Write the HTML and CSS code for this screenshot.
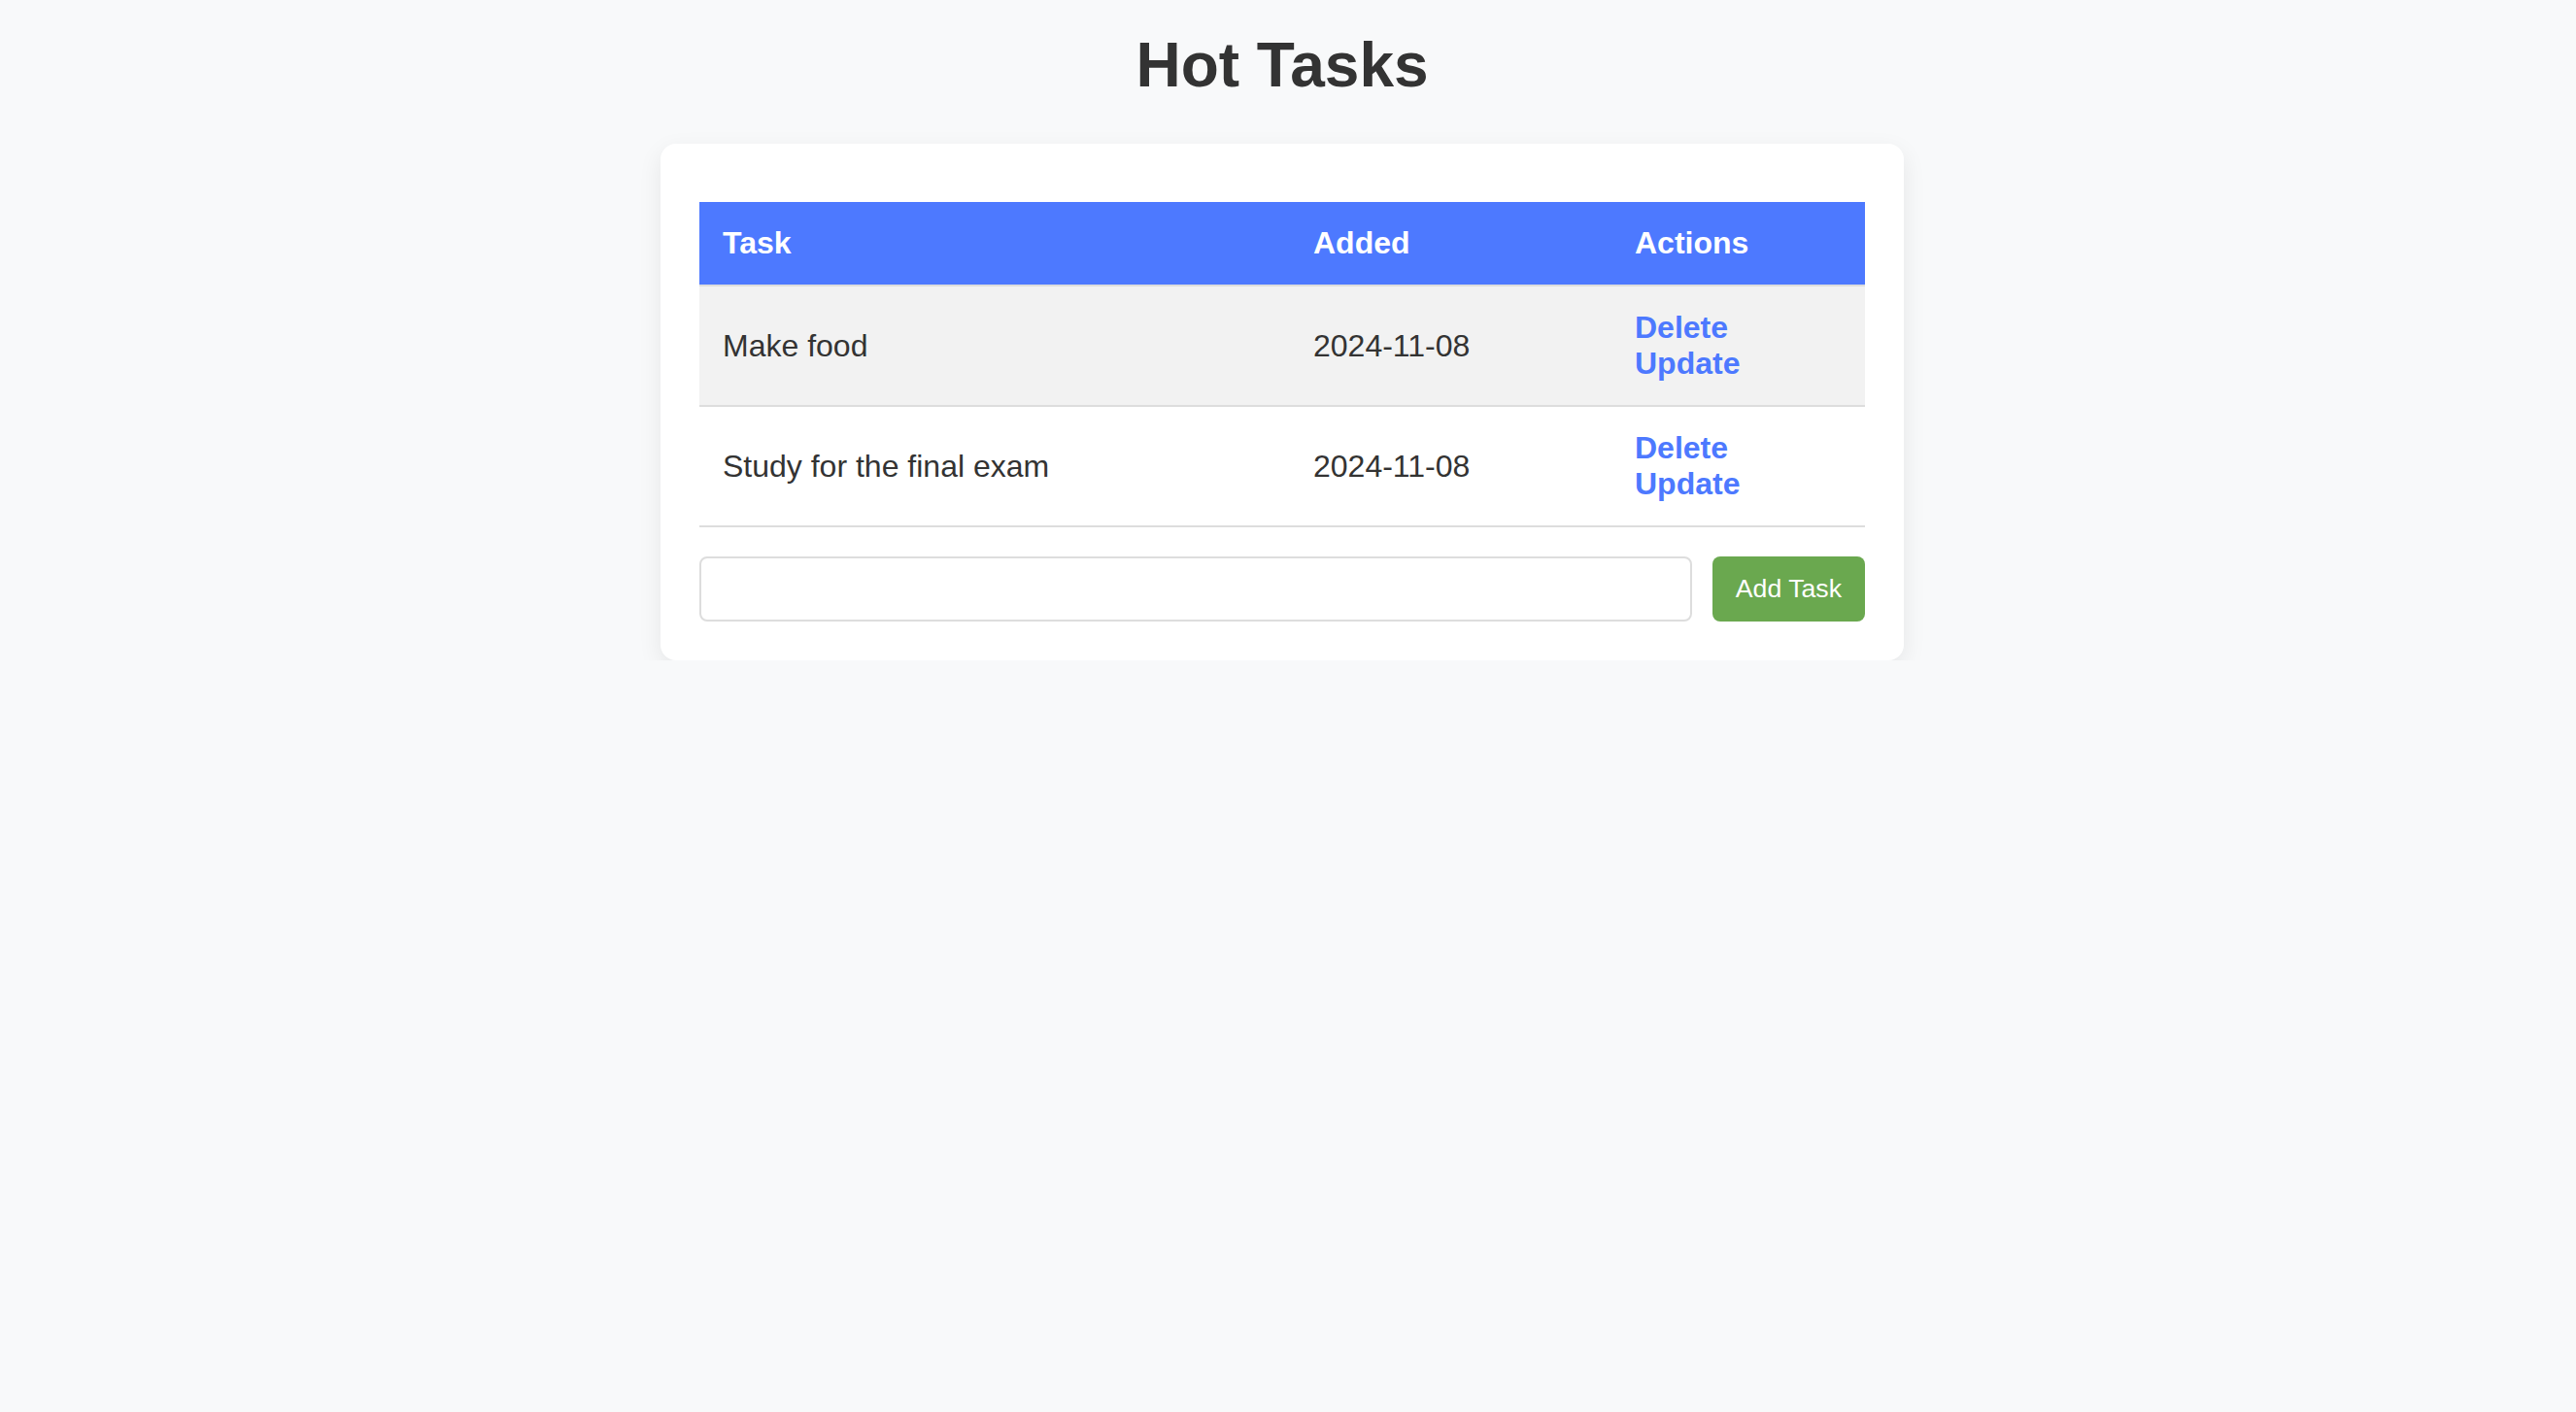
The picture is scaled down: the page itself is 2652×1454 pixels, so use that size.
FILE: index.html
```html
<!DOCTYPE html>
<html lang="en">
<head>
<meta charset="utf-8">
<title>Hot Tasks</title>
<link rel="stylesheet" href="styles.css">
</head>
<body>
<h1 class="title">Hot Tasks</h1>
<main class="card">
  <table class="tasks">
    <thead>
      <tr>
        <th class="col-task">Task</th>
        <th class="col-added">Added</th>
        <th class="col-actions">Actions</th>
      </tr>
    </thead>
    <tbody>
      <tr>
        <td>Make food</td>
        <td>2024-11-08</td>
        <td><a href="#" class="action">Delete</a><a href="#" class="action">Update</a></td>
      </tr>
      <tr>
        <td>Study for the final exam</td>
        <td>2024-11-08</td>
        <td><a href="#" class="action">Delete</a><a href="#" class="action">Update</a></td>
      </tr>
    </tbody>
  </table>
  <form class="add-form">
    <input class="add-input" type="text">
    <button class="add-btn" type="button">Add Task</button>
  </form>
</main>
</body>
</html>
```
FILE: styles.css
```css
html, body {
  margin: 0;
}
body {
  background: #f8f9fa;
  padding: 30px 12px 0 0;
  font-family: "Liberation Sans", Arial, sans-serif;
  color: #333;
}
.title {
  font-size: 64px;
  line-height: 74px;
  font-weight: bold;
  text-align: center;
  color: #333;
  margin: 0 0 44px;
}
.card {
  display: block;
  box-sizing: border-box;
  width: 1280px;
  margin: 0 auto;
  background: #fff;
  border-radius: 16px;
  padding: 60px 40px 40px;
  box-shadow: 0 8px 24px rgba(0, 0, 0, 0.08);
}
.tasks {
  width: 100%;
  border-collapse: collapse;
  table-layout: fixed;
  font-size: 32px;
}
.tasks th,
.tasks td {
  box-sizing: border-box;
}
.col-task { width: 608px; }
.col-added { width: 331px; }
.col-actions { width: 261px; }
.tasks th {
  background: #4d79ff;
  color: #fff;
  text-align: left;
  font-weight: bold;
  padding: 24px;
  border-bottom: 2px solid #ddd;
}
.tasks td {
  padding: 24px;
  border-bottom: 2px solid #ddd;
  color: #333;
  vertical-align: middle;
}
.tasks tbody tr:nth-child(odd) td {
  background: #f2f2f2;
}
.action {
  display: block;
  color: #4d79ff;
  font-weight: bold;
  text-decoration: none;
}
.add-form {
  display: flex;
  gap: 21px;
  margin: 30px 0 0;
}
.add-input {
  flex: 1;
  min-width: 0;
  padding: 16px;
  border: 2px solid #ddd;
  border-radius: 8px;
  font-family: "Liberation Sans", Arial, sans-serif;
  font-size: 26.67px;
  background: #fff;
}
.add-btn {
  padding: 0 24px;
  background: #6aa84f;
  color: #fff;
  border: none;
  border-radius: 8px;
  font-family: "Liberation Sans", Arial, sans-serif;
  font-size: 26.67px;
}
```
